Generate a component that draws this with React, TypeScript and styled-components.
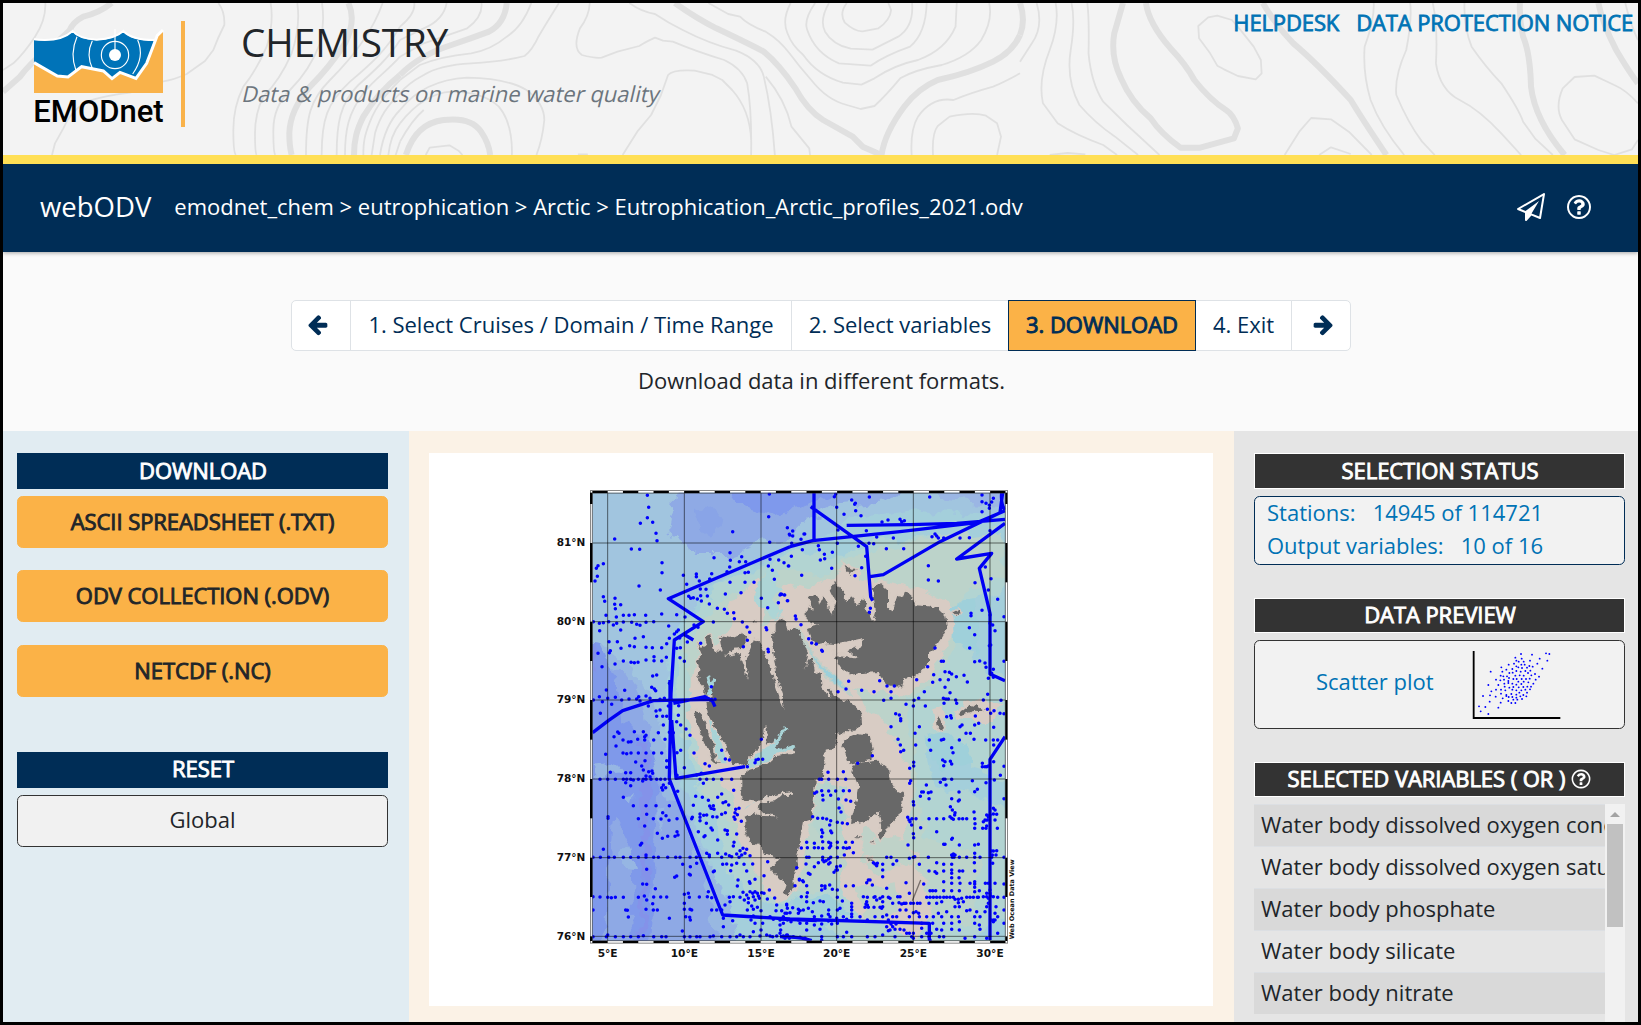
import React from "react";
import styled, { createGlobalStyle, css } from "styled-components";

const GlobalStyle = createGlobalStyle`
  *, *::before, *::after { box-sizing: border-box; }
  html, body { margin: 0; padding: 0; background: #000; }
  body { font-family: "Open Sans", "Noto Sans", sans-serif; font-size: 22px; line-height: 1.5; color: #212529; overflow: hidden; }
`;

const fauxBold = css`
  font-weight: 400;
  letter-spacing: -0.06px;
  -webkit-text-stroke: 0.9px currentColor;
`;

const Page = styled.div`
  width: 1641px;
  height: 1025px;
  border: 3px solid #000;
  background: #fafafa;
  display: flex;
  flex-direction: column;
  overflow: hidden;
`;

const Header = styled.header`
  position: relative;
  flex: none;
  height: 161px;
  border-bottom: 9px solid #ffdf55;
  background: #f3f3f3;
  display: flex;
  overflow: hidden;
`;

const Contours = styled.svg`
  position: absolute;
  left: -3px;
  top: -3px;
`;

const LogoBox = styled.div`
  position: relative;
  margin: 18px 0 0 28px;
  width: 154px;
  height: 106px;
  border-right: 4px solid #f9b24a;
`;

const Titles = styled.div`
  position: relative;
  margin: 11px 0 0 56px;
  flex: 1;
`;

const Title = styled.h1`
  margin: 0;
  font-size: 38.6px;
  font-weight: 400;
  line-height: 56px;
`;

const Tagline = styled.p`
  margin: 6px 0 0 2px;
  color: #6c757d;
  line-height: 34px;
  width: max-content;
  transform: skewX(-13deg);
`;

const TopLinks = styled.nav`
  position: relative;
  display: flex;
  gap: 17px;
  padding: 3px 5px 0 0;
`;

const TopLink = styled.a`
  color: #0073b5;
  ${fauxBold}
  letter-spacing: -0.12px;
  -webkit-text-stroke-width: 0.8px;
`;

const NavBar = styled.div`
  flex: none;
  height: 88px;
  background: #002d56;
  color: #fff;
  display: flex;
  align-items: center;
  padding: 0 45px 2px 37px;
  box-shadow: 0 1px 4px rgba(0, 0, 0, 0.35);
`;

const Brand = styled.span`
  font-size: 27.5px;
  margin-right: 23px;
  padding-bottom: 1px;
`;

const Crumbs = styled.span`
  flex: 1;
  padding-bottom: 2px;
`;

const NavIcons = styled.span`
  display: flex;
  align-items: center;
  gap: 20px;
`;

const Steps = styled.section`
  flex: none;
  height: 179px;
  padding: 48px 0 0 2px;
  display: flex;
  flex-direction: column;
  align-items: center;
`;

const StepGroup = styled.div`
  display: flex;
  height: 51px;
`;

const Step = styled.button<{ $active?: boolean; $w: number }>`
  width: ${(p) => p.$w}px;
  margin-left: -1px;
  padding: 0 0 2px;
  display: flex;
  align-items: center;
  justify-content: center;
  border: 1px solid ${(p) => (p.$active ? "#002d56" : "#dee2e6")};
  background: ${(p) => (p.$active ? "#fbb247" : "#fff")};
  color: #002d56;
  font: inherit;
  white-space: nowrap;
  z-index: ${(p) => (p.$active ? 1 : 0)};
  ${(p) => p.$active && fauxBold}
  &:first-child { border-radius: 5px 0 0 5px; padding-right: 7px; }
  &:last-child { border-radius: 0 5px 5px 0; padding-left: 5px; }
`;

const Hint = styled.p`
  margin: 13px 0 0;
`;

const Columns = styled.main`
  flex: 1;
  min-height: 0;
  display: grid;
  grid-template-columns: 406px 825px 404px;
`;

const LeftCol = styled.aside`
  background: #e1ecf2;
  padding: 22px 21px 0 14px;
`;

const MidCol = styled.section`
  background: #fbf2e6;
  padding: 22px 21px 0 20px;
`;

const RightCol = styled.aside`
  background: #e5e5e5;
  padding: 22px 13px 0 20px;
  display: flex;
  flex-direction: column;
  min-height: 0;
  overflow: hidden;
`;

const Heading = styled.h2<{ $dark?: boolean; $h?: number; $mt?: number }>`
  flex: none;
  margin: ${(p) => p.$mt ?? 0}px 0 7px;
  height: ${(p) => p.$h ?? 36}px;
  display: flex;
  align-items: center;
  justify-content: center;
  gap: 5px;
  padding: 0 0 2px 1px;
  font-size: inherit;
  ${fauxBold}
  color: #fff;
  background: ${(p) => (p.$dark ? "#333" : "#002d56")};
  border: ${(p) => (p.$dark ? "1px solid #fff" : "0")};
`;

const Button = styled.button<{ $plain?: boolean }>`
  width: 100%;
  height: 52px;
  margin-bottom: ${(p) => (p.$plain ? 0 : 22.4)}px;
  padding: 0 0 ${(p) => (p.$plain ? 3 : 1.5)}px;
  display: block;
  border-radius: 5.6px;
  border: 1px solid ${(p) => (p.$plain ? "#333" : "#fbb247")};
  background: ${(p) => (p.$plain ? "#f1f1f1" : "#fbb247")};
  color: #212529;
  font: inherit;
  ${(p) => !p.$plain && fauxBold}
`;

const MapPanel = styled.div`
  width: 784px;
  height: 553px;
  background: #fff;
  padding: 27px 0 0 111px;
`;

const StatusBox = styled.div`
  flex: none;
  height: 69px;
  border: 1px solid #002d56;
  border-radius: 5.6px;
  background: #f2f2f2;
  color: #0073b5;
  padding: 0 12px;
  line-height: 33px;
  white-space: pre;
`;

const StatusLine = styled.div`
  height: 33px;
  line-height: 31px;
`;

const PreviewBox = styled.div`
  flex: none;
  height: 89px;
  border: 1px solid #333;
  border-radius: 5.6px;
  background: #f2f2f2;
  color: #0073b5;
  display: flex;
  align-items: center;
  justify-content: space-between;
  padding: 0 63px 0 61px;
`;

const PreviewLabel = styled.span`
  padding-bottom: 6px;
`;

const ListWrap = styled.div`
  flex: 1;
  min-height: 0;
  display: flex;
`;

const List = styled.ul`
  flex: 1;
  min-width: 0;
  margin: 0;
  padding: 0;
  list-style: none;
  overflow: hidden;
`;

const Item = styled.li`
  height: 42px;
  padding-left: 7px;
  line-height: 38px;
  border-top: 1px solid #dcdfe3;
  white-space: nowrap;
  overflow: hidden;
  &:nth-child(odd) { background: #d9d9d9; }
`;

const Scroll = styled.div`
  width: 20px;
  background: #f1f1f1;
  display: flex;
  flex-direction: column;
  align-items: center;
`;

const ScrollArrow = styled.span`
  margin: 8px 0 7px;
  border: 5px solid transparent;
  border-top: 0;
  border-bottom-color: #a3a3a3;
`;

const ScrollThumb = styled.span`
  width: 16px;
  height: 103px;
  background: #c1c1c1;
`;

const ICONS = {
  plane:
    "M1764 11q33 24 27 64l-256 1536q-5 29-32 45-14 8-31 8-11 0-24-5l-527-215-298 327q-18 21-47 21-14 0-23-4-19-7-30-23.5t-11-36.5v-452l-472-193q-37-14-40-55-3-39 32-59l1664-960q35-21 68 2zm-342 1499l221-1323-1434 827 336 137 863-639-478 797z",
  question:
    "M1008 1200v160q0 14-9 23t-23 9h-160q-14 0-23-9t-9-23v-160q0-14 9-23t23-9h160q14 0 23 9t9 23zm256-496q0 50-15 90t-45.5 69-52 44-59.5 36q-32 18-46.5 28t-26 24-11.5 29v32q0 14-9 23t-23 9h-160q-14 0-23-9t-9-23v-68q0-35 10.5-64.5t24-47.5 39-35.5 41-25.5 44.5-21q53-25 75-43t22-49q0-42-43.5-71.5t-95.5-29.5q-56 0-95 27-29 20-80 83-9 12-25 12-11 0-19-6l-108-82q-10-7-12-20t5-23q122-192 349-192 129 0 238.5 89.5t109.5 214.5zm-368-448q-130 0-248.5 51t-204 136.5-136.5 204-51 248.5 51 248.5 136.5 204 204 136.5 248.5 51 248.5-51 204-136.5 136.5-204 51-248.5-51-248.5-136.5-204-204-136.5-248.5-51zm768 640q0 209-103 385.5t-279.5 279.5-385.5 103-385.5-103-279.5-279.5-103-385.5 103-385.5 279.5-279.5 385.5-103 385.5 103 279.5 279.5 103 385.5z",
  arrow:
    "M1664 896v128q0 53-32.5 90.5t-84.5 37.5h-704l293 294q38 36 38 90t-38 90l-75 76q-37 37-90 37-52 0-91-37l-651-652q-37-37-37-90 0-52 37-91l651-650q38-38 91-38 52 0 90 38l75 74q38 38 38 91t-38 91l-293 293h704q52 0 84.5 37.5t32.5 90.5z",
};

function Icon({ name, size, flip }: { name: keyof typeof ICONS; size: number; flip?: boolean }) {
  return (
    <svg width={size} height={size} viewBox="0 0 1792 1792" fill="currentColor">
      <path d={ICONS[name]} transform={flip ? "matrix(-1 0 0 1 1792 0)" : undefined} />
    </svg>
  );
}

function Logo() {
  return (
    <svg width="140" height="106" viewBox="93 63 420 318">
      <path d="M102 120Q180 128 218 95Q236 118 290 121Q345 118 370 95Q395 122 462 122L440 190L408 238L360 218L336 238L310 215L245 202L204 234L172 232L102 190Z" fill="#0073b8" />
      <path d="M102 190L172 230L204 234L245 202L310 215L336 238L360 218L408 236L440 190L470 108L489 95V279H102Z" fill="#f9b24a" />
      <path d="M102 188L172 228L204 231L245 200L310 213L336 236L360 217L408 235L440 190L472 106L489 90" fill="none" stroke="#fff" strokeWidth="9" />
      <path d="M102 118Q180 128 218 93Q236 116 290 119Q345 116 370 93Q395 120 462 120" fill="none" stroke="#fff" strokeWidth="6" />
      <g fill="none" stroke="#fff" strokeWidth="3.4">
        <circle cx="345" cy="165" r="41" />
        <path d="M277 122Q257 163 278 208M231 110Q209 160 228 212M413 120Q435 170 398 222M345 87V160" />
      </g>
      <circle cx="345" cy="165" r="18" fill="#fff" />
      <text x="100" y="365" textLength="391" lengthAdjust="spacing" fontFamily="Roboto, sans-serif" fontWeight="500" fontSize="93" fill="#000">EMODnet</text>
    </svg>
  );
}

function Contour({ thin, thick, transform }: { thin: string; thick: string; transform: string }) {
  return (
    <g transform={transform} fill="none" stroke="#e0e0e0" strokeLinejoin="round">
      <path d={thin} strokeWidth="1.8" vectorEffect="non-scaling-stroke" />
      <path d={thick} strokeWidth="6" vectorEffect="non-scaling-stroke" />
    </g>
  );
}

function HeaderContours() {
  return (
    <Contours width="1641" height="160" viewBox="0 0 1641 160">
      <Contour
        transform="scale(.33333)"
        thin="M136 9Q138 60 105 110T40 190L9 210M655 9Q675 35 673 75Q655 110 640 150L615 183L560 222Q520 240 490 244Q440 262 390 278Q320 285 260 305Q210 335 190 385L165 430L156 465M812 9Q822 70 800 140Q770 210 730 260Q700 320 700 390T708 465M892 9Q902 80 875 160Q840 240 790 290Q765 340 765 400T770 465M966 9Q975 70 960 130Q930 210 870 270Q820 320 820 390T826 465M1148 9C1120 90 1060 170 990 240C930 300 918 350 918 465M1200 80C1160 150 1110 195 1050 245C980 310 965 360 965 465M1200 120C1170 170 1120 215 1075 255C1020 310 1010 370 1010 465M1200 170C1160 215 1120 240 1090 280C1045 340 1035 390 1035 465M1200 240C1160 280 1130 315 1110 365C1092 410 1090 430 1090 465M1200 280C1160 320 1140 350 1125 400L1115 465M1200 330C1170 360 1150 400 1140 465M1200 370C1180 395 1170 420 1165 465M1200 425L1187 465"
        thick="M335 9Q300 38 250 50Q220 65 208 92Q180 120 140 150Q90 190 60 230L9 275M1045 9Q1070 60 1035 130Q990 200 930 260Q870 330 868 400Q868 440 875 465M1200 225C1150 265 1120 300 1090 350C1070 390 1062 420 1062 465"
      />
      <Contour
        transform="translate(400 0) scale(.39541 .33333)"
        thin="M36 9Q40 40 0 80M118 9Q110 60 60 85L0 120M206 9Q210 50 170 85Q110 110 60 130L0 170M332 9Q310 80 270 110Q230 150 180 160Q100 170 50 195L0 240M402 9Q370 70 350 110Q335 150 315 168Q260 185 180 190Q100 195 60 225Q20 250 0 280M480 9Q478 50 455 85Q435 145 460 165Q490 175 510 173L550 155L605 138Q630 120 645 113L665 122L690 125Q750 155 820 180Q865 205 878 250Q890 330 888 465M580 9Q610 35 645 42Q680 70 715 90Q780 130 850 152Q910 180 920 230Q940 330 948 465M780 9L830 42L860 50Q880 75 925 95Q960 120 985 160Q1010 200 1040 240Q1080 300 1130 315L1165 327L1200 318Q1230 285 1265 235Q1300 210 1370 195Q1440 170 1470 120Q1500 60 1490 9M0 330Q60 240 170 233Q270 235 320 270Q365 310 365 360Q360 420 345 465M0 370Q60 280 130 275Q210 275 250 320Q285 370 283 465M0 425Q30 360 60 330M65 465L75 443L125 436L148 452L158 465M563 465L600 395L635 345L660 285L678 225Q690 208 745 212L790 225L815 240L840 270Q885 330 888 420M450 463H475M925 230Q975 300 990 380L1035 445L1037 465M988 9Q965 60 980 100Q990 135 1020 165Q1055 225 1120 248L1167 254L1200 235Q1250 195 1310 180Q1380 150 1405 80L1408 9M1050 9Q1020 60 1030 90Q1050 160 1110 190L1190 197Q1230 165 1290 140Q1330 100 1332 9M1085 9Q1060 60 1075 95Q1095 135 1140 146L1195 149L1260 110Q1300 80 1295 9M1130 9Q1110 40 1125 68Q1150 95 1170 94L1210 85Q1240 60 1242 30L1235 9M1568 220Q1530 245 1500 260Q1440 280 1400 300Q1345 290 1310 350Q1290 390 1294 465M1348 465Q1345 400 1360 378L1390 350Q1450 335 1482 347L1510 370L1520 410L1510 465"
        thick="M270 9Q265 70 225 95Q180 115 130 135Q50 165 0 225M695 9Q750 55 800 85Q880 130 920 155Q960 195 1000 265Q1030 330 1070 360L1145 410L1170 440L1218 465Q1225 400 1275 320Q1310 265 1360 240Q1440 220 1500 185Q1550 155 1568 105M15 465Q40 370 110 360Q180 350 205 395Q225 430 228 465"
      />
      <Contour
        transform="translate(1020 0) scale(.39613 .33333)"
        thin="M42 9Q60 80 30 130L0 185M90 9Q100 70 75 150Q45 240 58 310L95 370Q140 405 210 435L245 465M130 9Q140 60 128 150T150 315Q190 370 240 410L298 465M170 9Q175 60 173 160Q180 250 210 305L270 375L352 465M75 465L120 459L165 463M893 9Q895 60 870 140Q865 220 885 300Q910 380 970 465M985 9Q990 60 975 150Q945 230 950 285Q980 370 1015 425L1047 465M1042 9Q1055 80 1050 190Q1060 270 1110 300Q1160 330 1215 400L1265 465M1122 9Q1120 80 1140 140Q1175 200 1215 250Q1260 330 1270 365L1300 415L1345 465M450 78L475 52L498 47L535 60L560 95L590 140L608 180L610 220L595 238L550 228L515 208L498 197L480 160L452 115ZM668 465L705 395L735 354L785 358L830 395L888 465M755 465L785 442L835 462M1560 310Q1530 270 1500 255L1450 227L1400 231L1370 265Q1350 320 1368 360L1400 418L1460 450L1500 465L1545 448L1560 420M1528 9Q1540 70 1560 120"
        thick="M260 9Q250 50 238 100Q228 170 255 235Q280 305 330 355Q355 400 405 443H455L540 415L550 385Q540 345 520 330Q480 300 440 240Q420 195 380 145Q325 70 318 9M613 9Q645 75 690 130Q750 190 835 300Q860 350 925 465M1262 9Q1260 60 1270 110Q1288 160 1290 260Q1300 360 1375 465M1460 9Q1470 70 1505 150Q1540 220 1560 250M0 9Q15 60 0 105"
      />
    </Contours>
  );
}

/* Map geometry is in a 1470 x 1470 grid, three units to the pixel. */
const LAND = [
  "M465 482L478 500L498 490L490 468L508 462L512 485L520 508L532 512L545 508L538 485L535 465L568 470L600 456L614 464L612 488L600 500L575 502L548 528L575 520L598 518L602 545L614 580L618 592L618 560L612 535L622 515L638 475L655 484L668 510L684 548L700 605L716 655L728 683L722 640L708 600L702 560L694 500L692 456L706 452V425L720 412L735 420L742 452L752 437L770 442L790 480L800 520L790 565L800 535L815 530L820 570L838 580L842 620L865 620L885 650L925 662L960 692L962 730L938 748L912 746L908 762L885 755L882 800L850 805V830L845 885L820 900L818 945L812 1015L785 1020L765 1140L770 1160L755 1180L758 1215L740 1238L725 1235L733 1210L708 1185L688 1165L683 1155L702 1152L718 1132L690 1125L670 1120L655 1090L625 1080L612 1060V1010L640 995L660 1004L700 1005L710 1016L700 1002L665 995L650 975L660 965L700 960L725 942L752 940V928L710 938L680 945L650 958L625 955L605 960L600 930V885L625 865L675 850L705 825L760 812L752 798L718 812L700 790L735 745L715 770L690 785L672 790L680 760L672 730L668 760L650 800L628 825L622 850L570 848L556 800L540 770L518 735L500 700L495 660L515 645L490 642L488 620L470 600L475 560L465 535L482 520Z",
  "M455 686L475 690L486 712L500 750L515 780L520 820L532 845L514 840L496 795L480 760Z",
  "M790 395L803 378L815 385L800 350L810 342L830 346L833 370L845 345L858 372L872 400L885 365L865 325L882 300L900 325L915 362L930 345L945 375L965 350L975 380L985 400L995 422L1004 390L998 350L995 320L1015 306L1040 328L1040 382L1052 388L1068 340L1085 350L1092 330L1115 350L1122 372L1160 375L1190 380L1212 402L1217 440L1200 470L1180 500L1160 515L1160 545L1140 570L1120 585L1090 590L1082 615L1050 616L1030 602L1015 580L1010 572L960 575L930 580L900 560L882 532L878 512L940 528L952 532L920 505L962 495L965 470L880 488L850 485L820 490L806 465L800 440L835 432L808 425L790 405Z",
  "M900 785L920 768L950 755L985 762L994 800L990 835L962 840L925 848L915 820L905 800Z",
  "M930 870L945 845L1010 838L1040 862L1045 895L1065 930L1088 935L1080 960L1085 980L1070 1005L1045 1030L1020 1075L1008 1070L1020 1040L1012 990L970 1020L930 1028L931 1010L945 960L953 920Z",
  "M1255 695L1275 680L1285 670L1305 675L1330 690L1300 688L1275 695L1260 700ZM1184 720L1192 705L1208 740L1200 748L1186 735ZM1236 392L1250 385L1258 395L1245 400ZM910 250L930 265L950 265L925 278L915 268ZM940 1065h18v3h-18zM985 1082l12-5v6ZM975 1130l22 4l-18 6ZM632 425l10-6v8Z",
].join("");

const TRACKS =
  "M158 758L205 722L248 692L340 662L515 658L525 680M750 200L385 356L490 425L403 480L393 640L388 897L548 1305L750 1317L1168 1330V1380M395 720L408 895L615 860M430 462L460 480M390 720V600M400 670L495 650L515 662M750 200L818 182L1080 155L1310 128L1395 92M822 38V182M812 80L980 200L992 350L998 362M990 290L1030 284L1200 185L1380 98L1388 38M920 136L1110 134L1250 130L1395 118M1395 130L1250 237L1355 220L1318 265L1350 400V582L1395 602M1395 770L1350 838V1380M720 1317L830 1322M720 1370Q780 1370 815 1382M1385 38Q1382 75 1395 90";

const DOT_SETS: [number, number, string][] = [
  [0, 0, "322,46 326,82 322,113 301,130 338,127 348,160 351,182 224,177 274,207 299,208 366,248 366,278 190,251 174,257 169,265 172,289 165,303 297,318 361,330 190,350 194,364 225,355 224,373 242,374 226,386 198,406 229,411 250,406 267,406 283,404 317,406 365,402 410,404 178,430 190,428 206,425 220,435 230,430 250,426 275,427 290,433 300,436 318,427 341,425 179,452 242,450 386,438 435,411 688,42 686,110 578,155 689,187 742,143 748,163 522,233 570,218 571,241 605,230 598,245 617,245 569,261 561,275 615,278 625,277 430,286 469,282 469,290 515,281 509,297 478,303 440,313 481,327 498,328 570,307 615,307 642,307 556,342 603,338 664,355 446,349 460,353 482,347 502,348 472,357 484,363 508,372 532,385 553,388 562,400 581,398 583,416 607,426 621,441 629,457 622,481 610,500 683,383 715,368 703,298 697,271 685,258 690,238 716,240 732,248 745,258 722,342 733,345 742,362 720,345 678,443 680,449 684,508 685,515 520,426 482,490 442,486 419,474 403,462 388,475 415,450 462,435 474,442 207,485 232,485 285,475 310,470 269,497 283,500 318,502 337,503 365,503 243,505 211,512 208,518 174,520 380,491 410,505 421,503 342,530 379,532 420,533 433,544 365,543 342,542 318,540 294,547 283,548 273,547 250,543 225,552 186,560 350,585 338,588 388,610 335,622 343,627 347,632 199,630 254,631 178,650 203,655 226,652 245,660 267,657 290,657 296,650 318,648 330,655 360,658 373,655 187,665 215,673 300,663 325,678 385,678 416,677 360,690 348,693 181,700 415,706 350,709 368,709 380,709 514,620 525,658 452,355 410,455 160,425 160,660"],
  [720, 0, "163,50 167,42 268,51 215,60 226,70 224,73 170,82 227,92 192,103 243,107 306,126 324,120 360,118 373,122 365,125 449,51 606,45 606,65 640,55 635,66 618,70 628,76 606,95 628,85 22,143 38,153 29,165 38,168 72,162 74,162 63,178 174,150 259,152 290,171 340,174 456,170 465,162 470,168 475,174 491,174 540,174 568,173 630,152 35,190 67,209 115,197 118,209 157,217 133,223 134,236 121,240 34,229 172,190 267,190 281,191 319,206 371,206 235,199 257,229 12,248 26,258 65,286 155,265 245,263 225,287 445,257 445,300 475,303 585,308 616,261 633,296 625,330 653,358 606,391 573,400 573,407 672,410 630,405 645,452 632,495 568,443 584,464 569,504 584,545 599,543 465,504 484,544 490,544 443,560 615,549 618,562 672,544 640,568 5,343 14,345 23,362 46,408 48,417 63,434 86,476 95,489 109,492 125,511 127,514 271,385 268,397 299,602 321,618 343,618 333,635 333,655 311,661 282,635 245,631 198,627 206,604 174,635 378,673 402,661 400,678 416,655 433,635 436,678 410,599 461,584 458,607 480,599 495,575 508,577 515,582 529,590 552,586 505,599 562,606 495,622 510,638 490,655 498,657 505,657 527,660 530,670 492,670 663,661 610,660 623,643 640,592 625,595 347,701 358,705 362,716 500,710 512,707 586,708 622,688 642,692 660,700 672,701 514,714 632,700 630,430 638,435 628,497 635,580"],
  [0, 720, "283,35 310,35 318,46 233,36 237,40 222,50 249,60 265,66 273,65 293,58 314,50 314,60 341,60 355,38 370,15 375,58 388,37 400,38 422,15 438,27 450,46 410,5 228,78 197,103 249,99 260,101 273,99 295,99 318,99 341,99 365,99 422,91 411,98 462,99 287,126 305,138 315,122 211,157 257,158 272,158 310,150 326,155 336,153 338,160 380,122 380,142 411,166 433,143 484,160 495,131 508,138 545,91 556,117 568,120 622,140 648,120 655,118 668,118 645,128 664,58 180,178 203,178 226,178 250,178 260,178 272,178 295,178 310,178 318,178 330,170 333,178 350,178 362,178 375,178 318,168 272,197 257,188 280,180 308,183 370,195 365,203 377,203 368,210 388,190 413,214 250,232 280,257 318,257 348,257 388,257 320,283 295,296 340,296 363,297 368,278 378,287 204,290 204,295 314,318 387,301 411,296 411,335 414,345 383,349 405,349 352,340 367,355 455,296 457,292 460,256 467,229 487,232 505,241 490,190 480,178 470,165 500,178 520,178 545,178 575,178 581,211 545,222 533,232 549,248 557,245 509,258 520,257 513,265 522,268 566,255 597,265 587,268 585,278 592,284 582,291 585,298 604,304 480,282 480,292 491,286 500,285 518,290 531,291 545,283 556,278 480,302 499,310 513,324 517,330 475,335 495,347 492,350 555,330 562,332 562,343 590,342 533,360 582,367 580,378 609,385 620,388 600,392 305,370 301,375 190,388 318,405 318,412 159,412 181,412 206,412 223,412 250,412 272,412 295,412 341,412 355,412 383,412 407,412 420,412 450,412 469,412 500,400 508,405 533,400 508,410 545,412 557,402 568,407 575,410 590,402 597,412 605,405 615,400 630,407 428,433 451,440 470,430 448,463 451,465 410,468 404,472 320,448 308,492 320,493 346,506 159,530 180,531 203,532 214,533 226,532 250,532 295,532 313,528 320,540 341,531 362,531 380,531 433,523 445,520 448,532 478,531 502,530 515,533 505,515 338,551 433,550 433,568 450,568 455,570 340,570 352,570 257,570 262,571 159,570 318,568 388,595 265,591 437,590 449,592 451,600 427,633 550,620 550,595 578,602 515,570 530,570 545,570 555,555 570,545 568,532 580,530 592,498 594,480 600,532 609,517 613,540 620,525 625,535 630,515 638,520 645,515 640,530 652,520 658,535 665,518 672,520 655,528 645,540 625,548 622,570 635,558 640,568 652,562 663,572 640,588 633,600 645,610 668,610 663,630 640,635 630,650 660,648 680,645 690,648 698,650 710,648 720,640 728,650 740,645 159,650 203,645 199,650 226,650 250,650 272,650 295,650 310,647 341,650 365,650 378,650 433,650 450,650 470,650 480,650 510,650 520,648 545,650 570,650 590,650 600,645 610,650 672,467 683,425 638,432 612,433 590,430 575,435 560,432 548,433 523,453 520,455 572,452 620,453 630,490 628,485 645,478 688,510 682,537 704,534 710,555 708,572 740,555 742,565 735,580 725,572 730,590 720,600 720,615 722,630 742,600 700,598 690,590"],
  [720, 720, "362,2 333,20 418,20 354,58 361,75 407,75 405,40 371,91 362,95 448,60 452,91 484,60 491,58 515,83 519,98 538,60 546,15 540,20 558,40 571,40 582,58 584,15 596,10 641,22 617,60 640,60 653,60 641,75 277,107 233,130 401,127 401,138 389,145 488,120 495,125 511,124 515,132 491,137 607,130 615,140 672,139 641,125 607,140 620,140 625,138 144,157 190,155 118,178 125,178 146,178 172,178 197,178 392,182 389,190 439,195 481,187 490,178 495,178 515,178 498,195 577,182 618,188 592,208 584,215 661,166 643,180 125,212 104,220 110,216 128,226 129,240 146,213 152,226 167,213 190,212 208,212 198,240 212,244 175,237 177,264 183,276 425,216 430,216 445,218 421,229 447,236 400,245 401,255 453,216 515,236 537,216 538,240 535,243 672,236 582,276 511,260 517,270 525,278 524,285 98,290 113,295 128,295 140,297 152,302 149,315 172,307 187,309 202,311 383,292 387,300 396,296 390,305 408,296 395,315 422,323 447,296 470,296 491,296 510,290 515,295 520,298 537,296 548,296 560,296 584,296 584,325 585,311 620,285 625,290 630,285 622,300 615,300 610,305 620,318 608,325 618,325 640,265 645,270 650,283 640,282 652,325 645,300 125,330 128,338 152,333 155,338 125,350 128,365 146,367 152,370 172,367 197,367 217,367 80,367 103,370 82,383 64,384 103,383 115,383 128,385 148,383 152,378 172,383 190,383 200,385 208,383 220,398 193,405 400,341 401,353 384,375 470,335 517,355 515,358 491,373 495,373 538,375 584,375 595,373 80,412 87,412 128,412 132,425 128,420 138,422 146,417 152,412 172,412 150,428 146,432 115,428 103,440 78,432 50,443 85,460 90,463 170,440 181,438 168,450 172,450 162,457 320,412 333,412 350,422 339,433 308,433 280,428 285,432 292,430 290,437 400,412 404,410 388,415 418,433 445,412 470,428 491,433 515,433 515,405 520,402 525,405 517,412 522,412 538,412 560,412 584,412 584,400 583,428 600,412 635,393 640,393 650,392 637,405 648,405 635,412 638,430 672,412 308,450 308,470 265,480 270,480 260,488 378,488 431,492 491,453 447,453 465,455 470,460 515,450 515,460 538,453 548,453 584,453 537,473 515,473 491,485 515,490 540,490 584,485 584,492 584,502 570,490 45,497 58,480 68,482 58,478 70,485 125,497 149,495 135,498 135,505 125,510 80,497 82,518 157,508 172,510 197,498 220,497 277,495 450,512 458,512 467,512 491,512 515,512 538,512 584,515 598,512 616,490 625,490 645,490 672,492 630,510 320,505 172,532 250,530 262,532 282,532 285,530 290,540 308,530 300,535 308,545 325,532 330,535 353,530 360,530 388,520 440,532 450,532 460,532 470,532 480,532 491,532 500,532 510,532 520,532 525,538 535,538 545,535 560,532 570,532 580,532 592,532 595,532 610,530 620,530 620,520 630,520 640,530 625,535 632,528 653,532 672,532 64,530 80,530 80,545 100,548 120,543 130,545 187,543 215,550 215,560 215,570 260,545 262,555 265,562 258,552 255,562 282,562 300,562 305,565 308,560 338,550 357,548 365,552 372,550 378,550 392,550 400,550 412,550 420,550 447,550 470,550 485,545 535,548 538,560 550,545 20,553 22,565 38,563 55,568 60,572 70,570 85,565 97,575 103,590 125,588 145,583 150,590 146,570 172,570 180,565 20,580 30,578 55,580 190,590 170,595 200,598 215,590 215,582 240,590 262,600 285,590 308,590 320,585 325,600 338,590 350,590 360,570 378,570 388,590 400,578 408,575 416,580 418,590 440,590 460,590 475,580 485,590 500,575 515,590 525,560 535,590 560,572 570,570 584,590 600,590 590,575 620,560 625,550 615,575 645,580 653,590 648,560 672,570 55,600 60,610 80,610 103,615 125,612 120,628 145,603 155,612 172,610 200,637 80,630 33,605 10,610 320,620 333,612 330,630 325,632 338,620 345,628 360,628 348,612 372,630 380,640 388,640 395,650 400,655 400,640 425,610 425,625 440,640 458,610 470,628 485,630 478,650 491,650 491,610 515,610 515,628 538,605 538,630 555,655 584,610 598,615 600,628 584,650 620,655 640,605 645,600 640,600 633,600 672,610 653,640 125,650 125,660 172,650 190,650 215,650 262,650 285,650 308,645 345,650 425,650 447,650 453,640 450,660 10,648 22,645 15,655 28,655 40,650 60,652 75,655"],
];

const dotPath = DOT_SETS.map(([ox, oy, pts]) =>
  pts.split(" ").map((p) => {
    const [x, y] = p.split(",").map(Number);
    return `M${x + ox} ${y + oy}h.1`;
  }).join("")
).join("");

const GRID_X = [203, 433, 663, 890, 1120, 1350];
const GRID_Y = [189, 425, 660, 897, 1133, 1369];
const LON = ["5°E", "10°E", "15°E", "20°E", "25°E", "30°E"];
const LAT = ["81°N", "80°N", "79°N", "78°N", "77°N", "76°N"];

function ArcticMap() {
  const ticks: React.ReactNode[] = [];
  for (let i = 0; i < 14; i++) {
    const x = 157 + i * 91.8;
    const w = Math.min(46, 1398 - x);
    ticks.push(<rect key={"t" + i} x={x} y={33} width={w} height={6} />, <rect key={"b" + i} x={x} y={1383} width={w} height={6} />);
  }
  [[38, 34], [189, 118], [425, 118], [660, 119], [897, 118], [1133, 118], [1369, 14]].forEach(([y, h], i) => {
    ticks.push(<rect key={"l" + i} x={150} y={y} width={7} height={h} />, <rect key={"r" + i} x={1396} y={y} width={6} height={h} />);
  });
  return (
    <svg width="490" height="490" viewBox="0 0 1470 1470">
      <defs>
        <clipPath id="sea"><rect x="157" y="38" width="1239" height="1345" /></clipPath>
        <filter id="rough" x="-5%" y="-5%" width="110%" height="110%">
          <feTurbulence type="fractalNoise" baseFrequency=".02" numOctaves="3" seed="4" />
          <feDisplacementMap in="SourceGraphic" scale="55" xChannelSelector="R" yChannelSelector="G" />
        </filter>
        <filter id="coast" x="-5%" y="-5%" width="110%" height="110%">
          <feTurbulence type="fractalNoise" baseFrequency=".06" numOctaves="3" seed="9" />
          <feDisplacementMap in="SourceGraphic" scale="18" xChannelSelector="R" yChannelSelector="G" />
        </filter>
      </defs>
      <g clipPath="url(#sea)">
        <rect x="100" width="1400" height="1470" fill="#a1c5df" />
        <g filter="url(#rough)">
          <path d="M410 20L385 150L440 190L450 225L560 225L640 195L740 170L790 120L870 85L1030 70L1120 20Z" fill="#8faae5" />
          <path d="M1130 20L1220 60L1420 75V20Z" fill="#9bb6e4" />
          <path d="M560 20L600 80L680 105L780 85L860 50L900 20Z" fill="#7f99ec" />
          <path d="M470 90L520 80L550 120L520 170L480 140Z" fill="#89a4e7" />
          <path d="M100 500L200 500L280 570L340 660L370 800L400 930L480 1100L560 1250L600 1420H100Z" fill="#98b8e1" />
          <path d="M100 560L250 570L310 660L330 800L360 920L430 1020L490 1180L540 1420H100Z" fill="#8ea9e5" />
          <path d="M100 490L180 500L230 600L240 720L330 780L350 900L330 1420H280L270 1100L220 1000L190 1420H100Z" fill="#7f99ea" />
          <path d="M160 490L175 550L160 570ZM300 790L322 790L326 1150L308 1400H294L306 1150Z" fill="#8492e9" />
          <path d="M235 1120L265 1090L285 1170L260 1190ZM160 860L230 850L250 880L170 885ZM350 990L370 985L365 1060ZM260 950L290 945L285 985Z" fill="#96b6e3" />
          <path d="M430 420L480 345L560 290L700 235L840 180L920 120L1130 90L1430 110V1440H600L570 1290L500 1130L440 920L400 840L370 720L385 560Z" fill="#a4cfdb" />
          <path d="M430 460L520 320L640 270L760 225L900 230L1020 180L1200 170L1420 180V320L1300 360L1250 460L1330 560L1410 600V900L1300 870L1200 760L1160 820L1180 920L1320 950L1420 1000V1300L1200 1440H980L760 1260L630 1270L560 1130L520 1000L470 900L450 800L400 700L410 560Z" fill="#b2d4d2" />
          <path d="M440 500L520 390L640 300L720 260L840 290L900 240L1100 190L1380 150L1400 280L1270 340L1240 500L1180 620L1100 650L1130 900L1160 1080L1320 1120L1300 1330L980 1320L900 1200L760 1250L660 1250L600 1090L500 950L470 760Z" fill="#bcd3ca" />
          <path d="M470 540L560 460L600 360L650 290L690 330L660 440L700 420L730 310L800 330L870 290L930 250L960 290L1090 310L1170 350L1260 370L1250 440L1200 520L1170 590L1090 650L1000 640L940 620L1000 700L1060 770L1110 860L1130 940L1090 1060L1150 1190L1180 1320L1120 1370L960 1310L900 1220L920 1080L880 920L830 920L800 1080L780 1240L700 1260L650 1180L590 1060L570 920L480 860L440 700Z" fill="#d8ccc4" />
          <path d="M1240 700L1290 660L1390 680L1370 720L1280 720ZM1180 690L1210 680L1220 760L1190 760ZM560 400L610 330L640 360L600 410Z" fill="#d8ccc4" />
          <path d="M835 950L860 900L910 920L915 1020L900 1080L850 1090L820 1020Z" fill="#b5d3cd" />
          <path d="M970 1050L1100 1080L1120 1150L1000 1180L960 1120Z" fill="#bfd2c8" />
          <path d="M940 1230L1060 1210L1080 1290L1000 1330Z" fill="#bfd2c8" />
          <path d="M1150 760L1260 780L1300 850L1200 870ZM760 1270L850 1240L940 1300L840 1340ZM1230 370L1300 360L1320 520L1240 480Z" fill="#9fd0da" />
          <path d="M640 360L720 420L690 360L730 330L680 260Z" fill="#add5d6" />
        </g>
        <path d="M500 680L540 770L560 850L530 850ZM640 905L740 780L760 740L720 790L680 800L620 860ZM612 990L650 960L750 930L660 958L620 980Z" fill="#a8d3d6" />
        <g filter="url(#coast)">
          <path d={LAND} transform="translate(4 4)" fill="#696969" stroke="#d6cac2" strokeWidth="9" />
          <path d={LAND} transform="translate(4 4)" fill="#676767" />
          <path d="M840 540L850 620L870 650M880 520L940 530" fill="none" stroke="#d6cac2" strokeWidth="10" />
          <path d="M505 590L512 620L525 600M515 625L500 645M620 862L660 822L700 800L718 772L738 742M700 798L718 812L765 800" fill="none" stroke="#a8d3d6" strokeWidth="11" />
          <path d="M772 440L812 510L850 560L880 580L940 650L870 600L835 560L800 500Z" fill="#9ccfda" stroke="#c0cfc8" strokeWidth="5" />
        </g>
        <path d="M1142 1200L1117 1262" stroke="#77706c" strokeWidth="4" />
        <path d={dotPath} fill="none" stroke="#0000ff" strokeWidth="10.500" strokeLinecap="round" />
        <path d={TRACKS} fill="none" stroke="#0000f4" strokeWidth="10" strokeLinejoin="round" />
        <path d={GRID_X.map((x) => `M${x} 38V1383`).join("") + GRID_Y.map((y) => `M157 ${y}H1396`).join("")} stroke="#000" strokeOpacity=".55" strokeWidth="3" />
      </g>
      <rect x="151.500" y="31.500" width="1251" height="1358" fill="none" stroke="#888" strokeWidth="3" />
      <path d="M157 39.500H1396V1382H157Z" fill="none" stroke="#333" strokeWidth="2" />
      <g fill="#000">{ticks}</g>
      <g fontFamily="DejaVu Sans, sans-serif" fontWeight="700" fontSize="29" fill="#111">
        {LAT.map((t, i) => <text key={t} x="136" y={GRID_Y[i] + 10} textAnchor="end" textLength="86" lengthAdjust="spacingAndGlyphs">{t}</text>)}
        {LON.map((t, i) => <text key={t} x={GRID_X[i]} y="1430" textAnchor="middle" textLength={i ? 82 : 60} lengthAdjust="spacingAndGlyphs">{t}</text>)}
        <text transform="translate(1423 1378) rotate(-90)" fontSize="19" textLength="240" lengthAdjust="spacingAndGlyphs">Web Ocean Data View</text>
      </g>
    </svg>
  );
}

const SCATTER =
  "904,701 937,703 979,699 989,701 887,712 906,715 960,715 983,721 890,721 931,721 912,724 897,724 883,730 905,733 953,730 867,733 845,741 890,738 915,733 929,737 939,739 968,745 878,746 896,741 907,743 922,742 860,748 813,754 848,754 890,752 903,754 917,752 932,751 869,758 879,757 925,758 843,766 851,768 862,768 887,766 900,765 912,766 935,765 946,761 958,769 853,778 868,773 881,776 891,776 906,776 919,776 930,775 948,778 829,778 842,780 866,782 896,784 912,784 926,786 941,790 806,794 836,794 854,790 866,788 878,790 890,793 905,791 855,799 869,802 881,800 897,801 911,800 923,799 934,799 815,813 829,808 844,808 857,810 878,808 890,810 905,810 917,808 931,807 922,817 844,820 860,824 875,821 890,823 899,817 911,824 920,828 790,827 811,825 828,829 860,827 878,830 890,832 849,834 867,830 902,828 907,836 893,838 881,838 810,844 866,842 875,848 887,848 843,847 778,858 797,860 836,862 783,873 806,881";

function ScatterIcon() {
  return (
    <svg width="89" height="70" viewBox="757 689 267 210">
      <path d="M762 692V893H1022" fill="none" stroke="#000" strokeWidth="5.500" />
      <path d={SCATTER.split(" ").map((p) => { const [x, y] = p.split(","); return `M${x} ${y}h.1`; }).join("")} stroke="#00f" strokeWidth="5.600" strokeLinecap="round" />
    </svg>
  );
}

const VARIABLES = [
  "Water body dissolved oxygen concentration",
  "Water body dissolved oxygen saturation",
  "Water body phosphate",
  "Water body silicate",
  "Water body nitrate",
];

export default function App() {
  return (
    <Page>
      <GlobalStyle />
      <Header>
        <HeaderContours />
        <LogoBox><Logo /></LogoBox>
        <Titles>
          <Title>CHEMISTRY</Title>
          <Tagline>Data &amp; products on marine water quality</Tagline>
        </Titles>
        <TopLinks>
          <TopLink>HELPDESK</TopLink>
          <TopLink>DATA PROTECTION NOTICE</TopLink>
        </TopLinks>
      </Header>
      <NavBar>
        <Brand>webODV</Brand>
        <Crumbs>emodnet_chem &gt; eutrophication &gt; Arctic &gt; Eutrophication_Arctic_profiles_2021.odv</Crumbs>
        <NavIcons>
          <Icon name="plane" size={28} />
          <Icon name="question" size={28} />
        </NavIcons>
      </NavBar>
      <Steps>
        <StepGroup>
          <Step $w={60}><Icon name="arrow" size={23} /></Step>
          <Step $w={442}>1. Select Cruises / Domain / Time Range</Step>
          <Step $w={218}>2. Select variables</Step>
          <Step $w={188} $active>3. DOWNLOAD</Step>
          <Step $w={97}>4. Exit</Step>
          <Step $w={60}><Icon name="arrow" size={23} flip /></Step>
        </StepGroup>
        <Hint>Download data in different formats.</Hint>
      </Steps>
      <Columns>
        <LeftCol>
          <Heading>DOWNLOAD</Heading>
          <Button>ASCII SPREADSHEET (.TXT)</Button>
          <Button>ODV COLLECTION (.ODV)</Button>
          <Button>NETCDF (.NC)</Button>
          <Heading $mt={55}>RESET</Heading>
          <Button $plain>Global</Button>
        </LeftCol>
        <MidCol>
          <MapPanel><ArcticMap /></MapPanel>
        </MidCol>
        <RightCol>
          <Heading $dark>SELECTION STATUS</Heading>
          <StatusBox>
            <StatusLine>{"Stations:   14945 of 114721"}</StatusLine>
            <StatusLine>{"Output variables:   10 of 16"}</StatusLine>
          </StatusBox>
          <Heading $dark $h={35} $mt={33}>DATA PREVIEW</Heading>
          <PreviewBox>
            <PreviewLabel>Scatter plot</PreviewLabel>
            <ScatterIcon />
          </PreviewBox>
          <Heading $dark $h={35} $mt={33}>SELECTED VARIABLES ( OR ) <Icon name="question" size={22} /></Heading>
          <ListWrap>
            <List>{VARIABLES.map((v) => <Item key={v}>{v}</Item>)}</List>
            <Scroll><ScrollArrow /><ScrollThumb /></Scroll>
          </ListWrap>
        </RightCol>
      </Columns>
    </Page>
  );
}
